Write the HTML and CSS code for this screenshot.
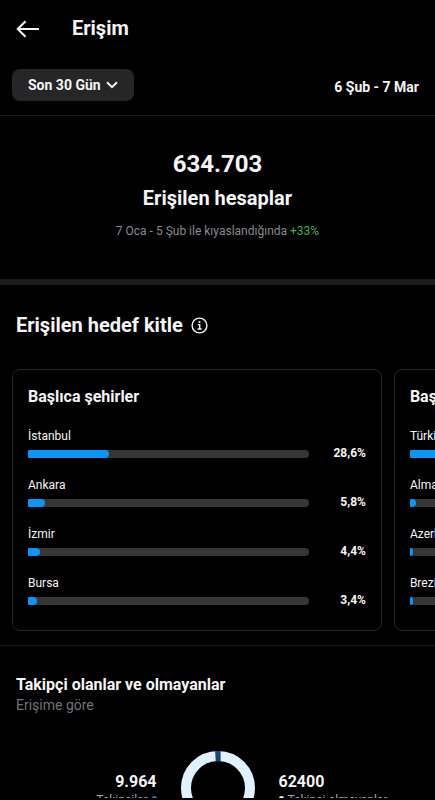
FILE: index.html
```html
<!DOCTYPE html>
<html lang="tr">
<head>
<meta charset="utf-8">
<meta name="viewport" content="width=device-width, initial-scale=1">
<title>Erişim</title>
<link rel="stylesheet" href="styles.css">
</head>
<body>
<div class="app">
  <header class="topbar">
    <button class="back" type="button" aria-label="Geri">
      <svg width="24" height="20" viewBox="0 0 24 20"><path d="M23 11H2M9.500 3.200L1.700 11l7.800 7.800"/></svg>
    </button>
    <h1>Erişim</h1>
  </header>
  <div class="filter">
    <button class="period" type="button">Son 30 Gün
      <svg width="12" height="8" viewBox="0 0 12 8"><path d="M1 1.200l5 5 5-5"/></svg>
    </button>
    <span class="range">6 Şub - 7 Mar</span>
  </div>
  <section class="hero">
    <p class="total">634.703</p>
    <h2>Erişilen hesaplar</h2>
    <p class="compare">7 Oca - 5 Şub ile kıyaslandığında <span class="gain">+33%</span></p>
  </section>
  <section class="audience">
    <div class="heading">
      <h2>Erişilen hedef kitle</h2>
      <button class="info" type="button" aria-label="Bilgi">
        <svg width="17" height="17" viewBox="0 0 17 17"><circle cx="8.500" cy="8.500" r="7.400"/><path d="M6.800 7.600h1.900v4.200M6.500 12h4.200"/><circle class="dot" cx="8.500" cy="5" r="1.100"/></svg>
      </button>
    </div>
    <div class="cards">
      <article class="card">
        <h3>Başlıca şehirler</h3>
        <ul>
          <li><span class="name">İstanbul</span><span class="track"><span class="fill" style="width:29%"></span></span><span class="value">28,6%</span></li>
          <li><span class="name">Ankara</span><span class="track"><span class="fill" style="width:6%"></span></span><span class="value">5,8%</span></li>
          <li><span class="name">İzmir</span><span class="track"><span class="fill" style="width:4.200%"></span></span><span class="value">4,4%</span></li>
          <li><span class="name">Bursa</span><span class="track"><span class="fill" style="width:3.200%"></span></span><span class="value">3,4%</span></li>
        </ul>
      </article>
      <article class="card">
        <h3>Başlıca ülkeler</h3>
        <ul>
          <li><span class="name">Türkiye</span><span class="track"><span class="fill" style="width:90%"></span></span></li>
          <li><span class="name">Almanya</span><span class="track"><span class="fill" style="width:2%"></span></span></li>
          <li><span class="name">Azerbaycan</span><span class="track"><span class="fill" style="width:1%"></span></span></li>
          <li><span class="name">Brezilya</span><span class="track"><span class="fill" style="width:1%"></span></span></li>
        </ul>
      </article>
    </div>
  </section>
  <section class="followers">
    <h3>Takipçi olanlar ve olmayanlar</h3>
    <p class="sub">Erişime göre</p>
    <div class="split">
      <div class="stat left"><strong>9.964</strong><span class="legend">Takipçiler <i class="blue"></i></span></div>
      <svg class="donut" width="74" height="74" viewBox="0 0 74 74">
        <circle class="ring" cx="37" cy="37" r="32"/>
        <path class="gap" d="M34.300 0h5.200v11h-4.700z"/>
        <path class="slice" d="M35.200 0h1.300l.2 10h-1.100zM37.400 0h1.300l-.2 10h-1z"/>
      </svg>
      <div class="stat"><strong>62400</strong><span class="legend"><i></i> Takipçi olmayanlar</span></div>
    </div>
  </section>
</div>
</body>
</html>
```
FILE: styles.css
```css
* { box-sizing: border-box; margin: 0; padding: 0; }
body { background: #000; color: #f5f5f5; font-family: Roboto, "Liberation Sans", sans-serif; }
button { background: none; border: 0; color: inherit; font: inherit; }
svg { display: block; fill: none; stroke: #f5f5f5; stroke-width: 2; }
h1, h2 { font-size: 20px; line-height: 24px; font-weight: 700; }
h3 { font-size: 16px; line-height: 20px; font-weight: 700; }
ul { list-style: none; }
.app { height: 100vh; overflow: hidden; border-bottom: 2px solid #000; }
.topbar { display: flex; align-items: center; gap: 32px; height: 56px; padding: 0 16px; }
.filter { display: flex; align-items: center; justify-content: space-between; height: 60px; padding: 0 16px 2px 12px; border-bottom: 1px solid #1c1c1c; font-size: 14px; font-weight: 700; }
.range { padding-top: 4px; }
.period { display: flex; align-items: center; gap: 5px; height: 32px; padding: 0 16px; border-radius: 8px; background: #262626; }
.hero { padding: 32px 16px 40px; border-bottom: 6px solid #1c1c1c; text-align: center; }
.total { font-size: 24px; line-height: 32px; font-weight: 700; }
.hero h2 { margin-top: 6px; }
.compare { margin-top: 13px; font-size: 12px; line-height: 16px; color: #8a8a8a; }
.gain { color: #3fae50; }
.audience { border-bottom: 1px solid #1c1c1c; padding: 28px 0 14px; }
.heading { display: flex; align-items: center; gap: 8px; padding: 0 16px; }
.info svg { stroke-width: 1.4; }
.dot { fill: #f5f5f5; stroke: none; }
.cards { display: flex; gap: 12px; margin-top: 32px; padding: 0 12px; overflow: hidden; }
.card { flex: 0 0 90%; border: 1px solid #262626; border-radius: 8px; padding: 17px 15px 25px; }
.card ul { display: grid; gap: 19px; margin-top: 21px; }
.card li { display: grid; grid-template-columns: 1fr 57px; row-gap: 4px; }
.name { grid-column: 1 / -1; font-size: 12px; line-height: 16px; }
.track { height: 8px; margin-top: 2px; border-radius: 1px 4px 4px 1px; background: #363636; overflow: hidden; }
.fill { display: block; height: 100%; border-radius: 1px 4px 4px 1px; background: #0c95f6; }
.value { height: 10px; font-size: 12px; line-height: 10px; font-weight: 700; text-align: right; }
.followers { padding: 29px 16px 0; }
.sub { font-size: 14px; line-height: 20px; color: #737373; }
.split { display: grid; grid-template-columns: 1fr 74px 1fr; column-gap: 24px; margin-top: 36px; }
.stat { padding-top: 21px; }
.stat strong { display: block; font-size: 16px; line-height: 20px; font-weight: 700; }
.left { text-align: right; }
.legend { display: flex; align-items: center; gap: 4px; font-size: 12px; line-height: 16px; color: #a8a8a8; white-space: nowrap; }
.left .legend { justify-content: flex-end; }
.legend i { width: 5px; height: 5px; margin-bottom: 4px; border-radius: 50%; background: #e0f1ff; }
.legend .blue { background: #2c75c7; }
.ring { stroke: #e0f1ff; stroke-width: 10; }
.gap { fill: #061c38; stroke: none; }
.slice { fill: #2c65a5; stroke: none; }
```
